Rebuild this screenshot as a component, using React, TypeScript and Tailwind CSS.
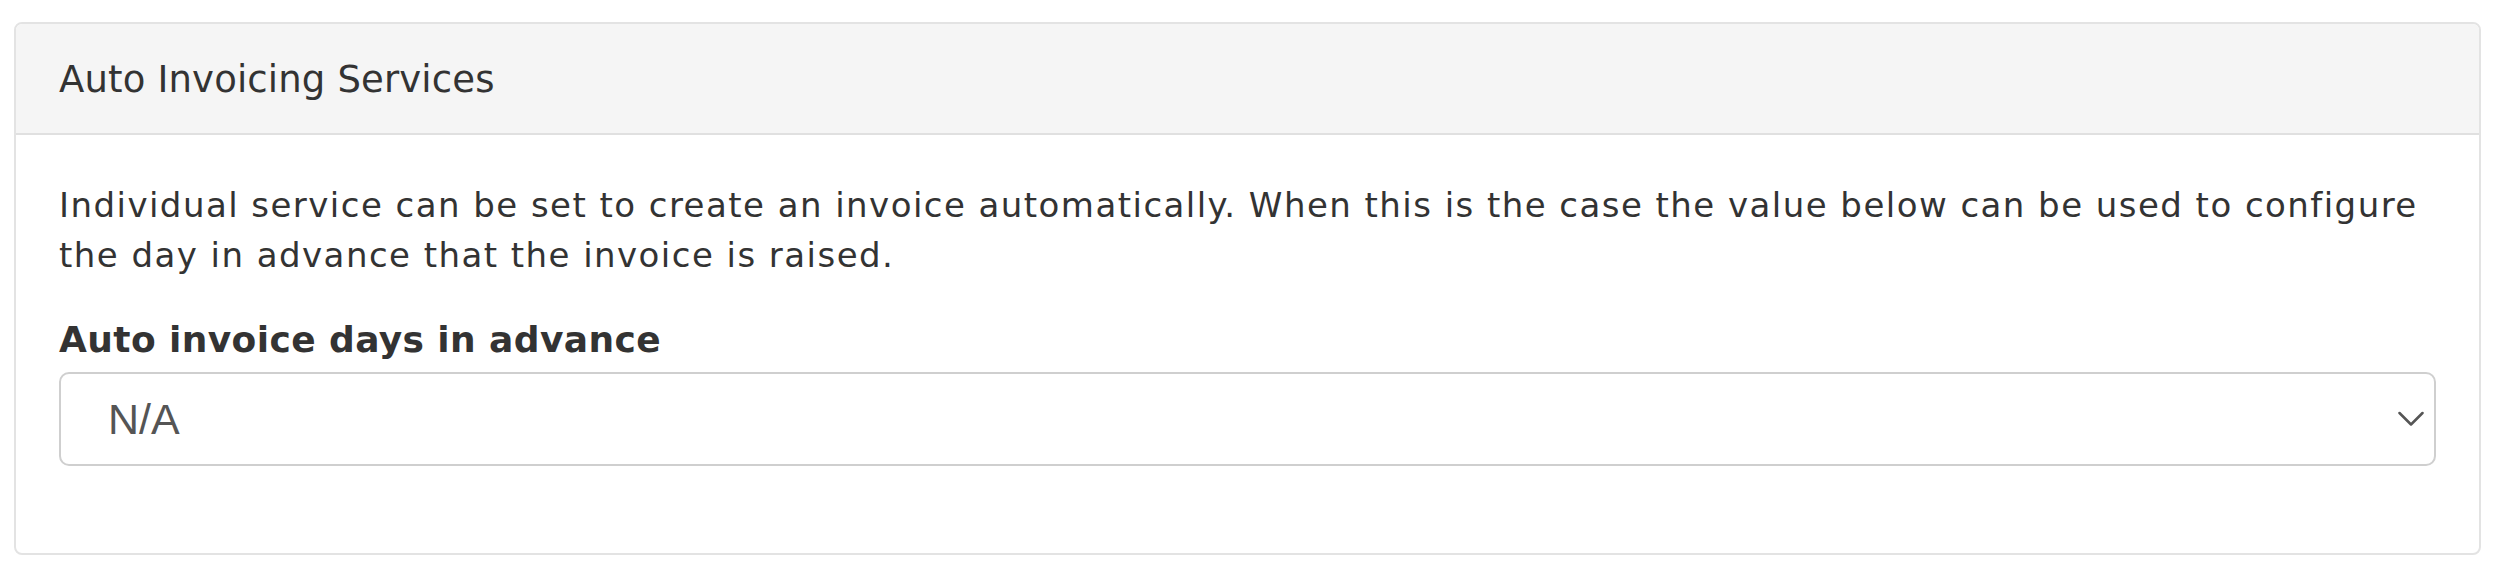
import React from "react";

export default function App() {
  return (
    <div className="w-[2500px] h-[575px] bg-white pt-[22px] px-[14px] [font-family:'DejaVu_Sans',Verdana,sans-serif] text-[#333]">
      <div className="w-[2467px] h-[533px] border-2 border-[#e3e3e3] rounded-[8px] flex flex-col overflow-hidden">
        <div className="h-[111px] shrink-0 bg-[#f5f5f5] border-b-2 border-[#e0e0e0] flex items-center px-[43px] pt-[3px] text-[37px] tracking-[0.15px]">
          Auto Invoicing Services
        </div>
        <div className="px-[43px] pt-[45px]">
          <p className="text-[34px] leading-[50px] tracking-[1.45px]">
            Individual service can be set to create an invoice automatically. When this is the case the value below can be used to configure the day in advance that the invoice is raised.
          </p>
          <div className="mt-[38px] text-[36px] font-bold leading-[44px] tracking-[0.4px]">Auto invoice days in advance</div>
          <div className="mt-[10px] h-[94px] border-2 border-[#cfcfcf] rounded-[10px] flex items-center justify-between pl-[47px] pr-[10px]">
            <span className="text-[43px] text-[#555] [font-family:'Liberation_Sans',Arial,sans-serif]">N/A</span>
            <svg width="26" height="16" viewBox="0 0 26 16" fill="none">
              <path d="M1.5 2 L13 13.5 L24.5 2" stroke="#555" strokeWidth="2.5" strokeLinecap="round" strokeLinejoin="round" />
            </svg>
          </div>
        </div>
      </div>
    </div>
  );
}
